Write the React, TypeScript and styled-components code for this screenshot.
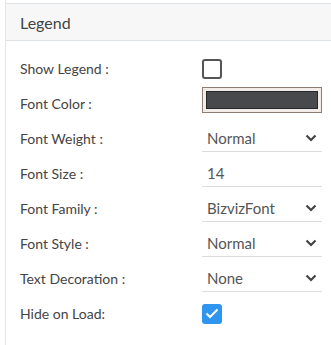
import styled, { createGlobalStyle } from "styled-components"

const Global = createGlobalStyle`
  html, body { margin: 0; padding: 0; background: #fff; }
  body { font-family: Lato, "Open Sans", sans-serif; }
`

const Panel = styled.div`
  margin-left: 5px;
  padding-top: 3px;
  border-left: 1px solid #e3e6e8;
  min-height: 342px;
`

const Header = styled.div`
  height: 36px;
  display: flex;
  align-items: center;
  padding-left: 14px;
  background: #f7f7f7;
  border-top: 1px solid #dde2e6;
  border-bottom: 1px solid #dde2e6;
  font-size: 16px;
  color: #444;
`

const Body = styled.div`
  padding: 10px 0 0 14px;
`

const Row = styled.div`
  display: grid;
  grid-template-columns: 182px 120px;
  height: 35px;
  align-items: center;
`

const Label = styled.div`
  font-size: 14px;
  color: #444;
`

const Box = styled.div<{ checked?: boolean }>`
  width: 20px;
  height: 20px;
  box-sizing: border-box;
  border-radius: 3px;
  border: ${p => (p.checked ? "none" : "2px solid #555")};
  background: ${p => (p.checked ? "#2f95ef" : "#fff")};
  display: flex;
  align-items: center;
  justify-content: center;
`

const Swatch = styled.div`
  align-self: start;
  margin-top: 1px;
  height: 26px;
  box-sizing: border-box;
  border: 1px solid #8c7e72;
  background: #f1ece7;
  padding: 3px;
  div {
    height: 100%;
    box-sizing: border-box;
    background: #48494d;
    border: 1px solid #26272a;
  }
`

const Select = styled.div`
  height: 26px;
  box-sizing: border-box;
  border-bottom: 1px solid #ddd;
  display: flex;
  align-items: center;
  justify-content: space-between;
  padding: 0 5px 0 5px;
  font-size: 15px;
  color: #555;
`

const Chevron = () => (
  <svg width="12" height="8" viewBox="0 0 12 8">
    <polyline points="1.5,1.5 6,6 10.5,1.5" fill="none" stroke="#444" strokeWidth="2.2" />
  </svg>
)

const Check = () => (
  <svg width="14" height="11" viewBox="0 0 14 11">
    <polyline points="1.5,5.5 5,9 12.5,1.5" fill="none" stroke="#fff" strokeWidth="2" />
  </svg>
)

type Field =
  | { label: string; kind: "checkbox"; checked: boolean }
  | { label: string; kind: "color" }
  | { label: string; kind: "select"; value: string }
  | { label: string; kind: "input"; value: string }

const fields: Field[] = [
  { label: "Show Legend :", kind: "checkbox", checked: false },
  { label: "Font Color :", kind: "color" },
  { label: "Font Weight :", kind: "select", value: "Normal" },
  { label: "Font Size :", kind: "input", value: "14" },
  { label: "Font Family :", kind: "select", value: "BizvizFont" },
  { label: "Font Style :", kind: "select", value: "Normal" },
  { label: "Text Decoration :", kind: "select", value: "None" },
  { label: "Hide on Load:", kind: "checkbox", checked: true },
]

function Control({ f }: { f: Field }) {
  if (f.kind === "checkbox") return <Box checked={f.checked}>{f.checked && <Check />}</Box>
  if (f.kind === "color") return <Swatch><div /></Swatch>
  if (f.kind === "input") return <Select>{f.value}</Select>
  return <Select>{f.value}<Chevron /></Select>
}

export default function App() {
  return (
    <>
      <Global />
      <Panel>
        <Header>Legend</Header>
        <Body>
          {fields.map(f => (
            <Row key={f.label}>
              <Label>{f.label}</Label>
              <Control f={f} />
            </Row>
          ))}
        </Body>
      </Panel>
    </>
  )
}
